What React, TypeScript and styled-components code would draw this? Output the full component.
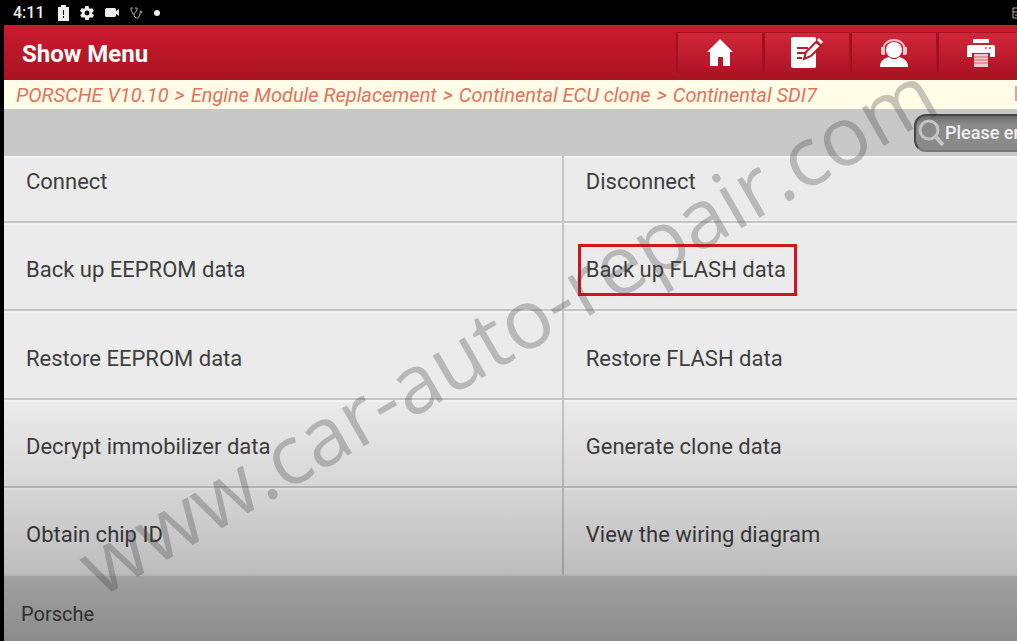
import React from "react";
import styled, { createGlobalStyle } from "styled-components";

const GlobalStyle = createGlobalStyle`
  * { box-sizing: border-box; }
  body { margin: 0; background: #000; }
  button, input { font-family: inherit; color: inherit; }
`;

const Screen = styled.div`
  position: relative;
  display: flex;
  flex-direction: column;
  min-height: 100vh;
  overflow: hidden;
  background: #000;
  color: #3e3e3e;
  font-family: Roboto, "Liberation Sans", sans-serif;
`;

const StatusBar = styled.div`
  display: flex;
  align-items: center;
  gap: 11px;
  height: 25px;
  padding-left: 13px;
  color: #eee;
  font-size: 16px;
  font-weight: 500;
  line-height: 24px;
`;

const Clock = styled.time`
  margin-right: 2px;
`;

const SignalIcon = styled.svg`
  margin-left: auto;
`;

const AppFrame = styled.div`
  flex: 1;
  display: flex;
  flex-direction: column;
  margin-left: 4px;
  background: #c8c8c8;
`;

const Header = styled.header`
  display: flex;
  align-items: center;
  justify-content: space-between;
  height: 55px;
  padding-left: 18px;
  overflow: hidden;
  background: linear-gradient(#cb1a2f, #a8141f);
`;

const Title = styled.h1`
  margin: 0;
  padding-top: 2px;
  color: #fff;
  font-size: 24px;
  font-weight: 700;
  line-height: 32px;
`;

const Actions = styled.nav`
  display: flex;
  margin-right: -7px;
`;

const ActionButton = styled.button`
  display: flex;
  align-items: center;
  justify-content: center;
  width: 87px;
  height: 41px;
  padding: 0;
  border: 1px solid #a81324;
  border-left: 2px solid #a01020;
  background: linear-gradient(#d0273a, #b01424);
  color: #fff;
`;

const Breadcrumb = styled.div`
  display: flex;
  justify-content: space-between;
  height: 29px;
  padding-left: 12px;
  overflow: hidden;
  background: #fffce8;
  color: #e2735c;
  font-size: 20px;
  line-height: 30px;
  white-space: nowrap;
`;

const Path = styled.div`
  display: flex;
  gap: 6px;
  font-style: italic;
`;

const EdgeMark = styled.svg`
  margin-top: 6px;
`;

const Toolbar = styled.div`
  display: flex;
  align-items: center;
  justify-content: flex-end;
  height: 47px;
  overflow: hidden;
`;

const SearchBox = styled.label`
  display: flex;
  align-items: center;
  width: 240px;
  height: 38px;
  margin-right: -137px;
  padding-left: 2px;
  border: 2px solid #454545;
  border-bottom-color: #777;
  border-radius: 12px;
  background: linear-gradient(#6c6c6c, #8a8a8a 25%);
`;

const SearchInput = styled.input`
  flex: 1;
  min-width: 0;
  padding: 0;
  border: 0;
  outline: 0;
  background: transparent;
  font-size: 18px;
  font-weight: 500;
  line-height: 24px;
  &::placeholder { color: #f0f0f0; opacity: 1; }
`;

const Menu = styled.main`
  flex: 1;
  display: grid;
  grid-template-columns: 21fr 17fr;
  grid-template-rows: 67fr repeat(4, 88fr);
`;

const MenuItem = styled.button`
  display: flex;
  align-items: flex-end;
  padding: 0 0 27px 22px;
  border: 0;
  border-bottom: 2px solid #c4c4c4;
  background: #ebebeb;
  box-shadow: inset 0 2px #f3f3f3;
  font-size: 22px;
  line-height: 24px;
  text-align: left;
  &:nth-child(odd) { border-right: 2px solid #c4c4c4; }
  &:nth-last-child(-n + 2) { border-bottom-color: #e0e0e0; }
`;

const Label = styled.span<{ $marked?: boolean }>`
  position: relative;
  &::after {
    content: "";
    display: ${(p) => (p.$marked ? "block" : "none")};
    position: absolute;
    inset: -14px -11px -14px -8px;
    border: 3px solid #d2141e;
  }
`;

const Footer = styled.footer`
  height: 65px;
  padding: 26px 17px 15px;
  font-size: 20px;
  line-height: 24px;
`;

const Shade = styled.div`
  position: absolute;
  inset: auto 0 0 4px;
  height: 241px;
  background: linear-gradient(
    rgba(0, 0, 0, 0),
    rgba(0, 0, 0, 0.09) 37%,
    rgba(0, 0, 0, 0.2) 73%,
    rgba(0, 0, 0, 0.3)
  );
  pointer-events: none;
`;

const Watermark = styled.div`
  position: absolute;
  left: 105px;
  bottom: 35px;
  color: rgba(60, 60, 60, 0.29);
  font-family: "Open Sans", "Noto Sans", sans-serif;
  font-size: 82px;
  line-height: 82px;
  white-space: nowrap;
  transform: rotate(-30deg);
  transform-origin: 0 100%;
  pointer-events: none;
`;

const HomeIcon = () => (
  <svg width="26" height="27" viewBox="0 0 26 27" fill="currentColor">
    <path d="M13 0 26 13h-3v14h-7v-9h-5v9H3V13H0z" />
  </svg>
);

const NoteIcon = () => (
  <svg width="32" height="31" viewBox="0 0 32 31">
    <path fill="#fff" d="M2 0h21a2 2 0 0 1 2 2v27a2 2 0 0 1-2 2H2a2 2 0 0 1-2-2V2a2 2 0 0 1 2-2z" />
    <path stroke="#b81a2c" strokeWidth="2" d="M6 11h11M6 16h8M6 21h5" />
    <path
      fill="#fff"
      stroke="#b81a2c"
      strokeWidth="2"
      d="M13 22l2-7L25 5l5 4-10 10z"
    />
    <path fill="#fff" d="M26 3l2-2 4 4-2 2z" />
  </svg>
);

const SupportIcon = () => (
  <svg width="30" height="28" viewBox="0 0 30 28">
    <path fill="none" stroke="#f6c8cc" strokeWidth="2" d="M4 12C4 5 9 1 15 1s11 4 11 11" />
    <path fill="#f6c8cc" d="M2 8h4v8H4a2 2 0 0 1-2-2zM24 8h4v6a2 2 0 0 1-2 2h-2z" />
    <circle cx="15" cy="11" r="8" fill="#fff" />
    <path fill="#fff" d="M1 28c0-6 3-8 9-10 3 3 7 3 10 0 6 2 9 4 9 10z" />
  </svg>
);

const PrintIcon = () => (
  <svg width="28" height="28" viewBox="0 0 28 28">
    <path fill="#fff" d="M6 0h16v4H6zM2 6h24a2 2 0 0 1 2 2v10h-5v-4H5v4H0V8a2 2 0 0 1 2-2z" />
    <path fill="#f6c8cc" d="M7 15h14v13H7z" />
    <path stroke="#b81a2c" strokeOpacity="0.6" d="M7 18h14M7 21h14M7 24h14" />
    <path stroke="#b81a2c" strokeWidth="2" strokeOpacity="0.6" d="M18 9h2M22 9h2" />
  </svg>
);

const BatteryIcon = () => (
  <svg width="11" height="16" viewBox="0 0 11 16" fill="#eee">
    <path fillRule="evenodd" d="M3 0h5v2h3v14H0V2h3zM5 5v5h1V5zm0 6v2h1v-2z" />
  </svg>
);

const GearIcon = () => (
  <svg width="14" height="14" viewBox="2 2 20 20" fill="#eee">
    <path d="M19.4 13c0-.3.1-.6.1-1s0-.7-.1-1l2.1-1.600c.2-.2.300-.4.100-.6l-2-3.500c-.1-.2-.4-.3-.6-.2l-2.500 1c-.5-.4-1.100-.7-1.700-1l-.4-2.600c0-.3-.2-.5-.5-.5h-4c-.3 0-.5.2-.5.4l-.4 2.700c-.6.2-1.100.6-1.700 1l-2.500-1c-.2-.1-.5 0-.6.200l-2 3.500c-.1.200-.1.500.1.600L4.600 11c0 .3-.1.600-.1 1s0 .7.1 1l-2.100 1.600c-.2.200-.3.400-.1.600l2 3.500c.1.200.4.300.6.200l2.500-1c.5.400 1.100.7 1.700 1l.4 2.600c0 .3.2.5.5.5h4c.3 0 .5-.2.500-.4l.4-2.700c.6-.2 1.100-.6 1.700-1l2.500 1c.2.100.5 0 .6-.2l2-3.500c.1-.2.100-.5-.1-.6zM12 15.500a3.500 3.500 0 1 1 0-7 3.500 3.500 0 0 1 0 7z" />
  </svg>
);

const CameraIcon = () => (
  <svg width="14" height="9" viewBox="0 0 14 9" fill="#eee">
    <path d="M1 0h9l1 1v2l3-2v7l-3-2v2l-1 1H1L0 8V1z" />
  </svg>
);

const StethoscopeIcon = () => (
  <svg width="13" height="12" viewBox="0 0 13 12" fill="none" stroke="#aaa">
    <path d="M3 1H1v2l2 4h1l3-4V1H5M4 7v2l2 2h2l2-3V6" />
    <circle cx="11" cy="5" r="1" />
  </svg>
);

const DotIcon = () => (
  <svg width="6" height="6" viewBox="0 0 6 6" fill="#eee">
    <circle cx="3" cy="3" r="3" />
  </svg>
);

const SearchIcon = () => (
  <svg width="27" height="28" viewBox="0 0 27 28" fill="none" stroke="#c4c4c4">
    <circle cx="11" cy="11" r="9" strokeWidth="3" />
    <path d="M18 18l7 8" strokeWidth="4" />
  </svg>
);

const trail = [
  "PORSCHE V10.10",
  "Engine Module Replacement",
  "Continental ECU clone",
  "Continental SDI7",
];

const items = [
  "Connect",
  "Disconnect",
  "Back up EEPROM data",
  "Back up FLASH data",
  "Restore EEPROM data",
  "Restore FLASH data",
  "Decrypt immobilizer data",
  "Generate clone data",
  "Obtain chip ID",
  "View the wiring diagram",
];

export default function App() {
  return (
    <>
      <GlobalStyle />
      <Screen>
        <StatusBar>
          <Clock>4:11</Clock>
          <BatteryIcon />
          <GearIcon />
          <CameraIcon />
          <StethoscopeIcon />
          <DotIcon />
          <SignalIcon width="5" height="12" viewBox="0 0 5 12" fill="none" stroke="#b8a8a0">
            <path d="M5 1H1v10h4M1 5h4M3 8h2" />
          </SignalIcon>
        </StatusBar>
        <AppFrame>
          <Header>
            <Title>Show Menu</Title>
            <Actions>
              <ActionButton aria-label="Home"><HomeIcon /></ActionButton>
              <ActionButton aria-label="Feedback"><NoteIcon /></ActionButton>
              <ActionButton aria-label="Support"><SupportIcon /></ActionButton>
              <ActionButton aria-label="Print"><PrintIcon /></ActionButton>
            </Actions>
          </Header>
          <Breadcrumb>
            <Path>
              {trail.map((step, i) => (
                <React.Fragment key={step}>
                  {i > 0 && <span>&gt;</span>}
                  <span>{step}</span>
                </React.Fragment>
              ))}
            </Path>
            <EdgeMark width="2" height="15" viewBox="0 0 2 15">
              <path d="M1 0v15" stroke="#f29a8c" strokeWidth="2" />
            </EdgeMark>
          </Breadcrumb>
          <Toolbar>
            <SearchBox>
              <SearchIcon />
              <SearchInput aria-label="Search" placeholder="Please enter" />
            </SearchBox>
          </Toolbar>
          <Menu>
            {items.map((item) => (
              <MenuItem key={item}>
                <Label $marked={item === "Back up FLASH data"}>{item}</Label>
              </MenuItem>
            ))}
          </Menu>
          <Footer>Porsche</Footer>
        </AppFrame>
        <Shade />
        <Watermark>www.car-auto-repair.com</Watermark>
      </Screen>
    </>
  );
}
